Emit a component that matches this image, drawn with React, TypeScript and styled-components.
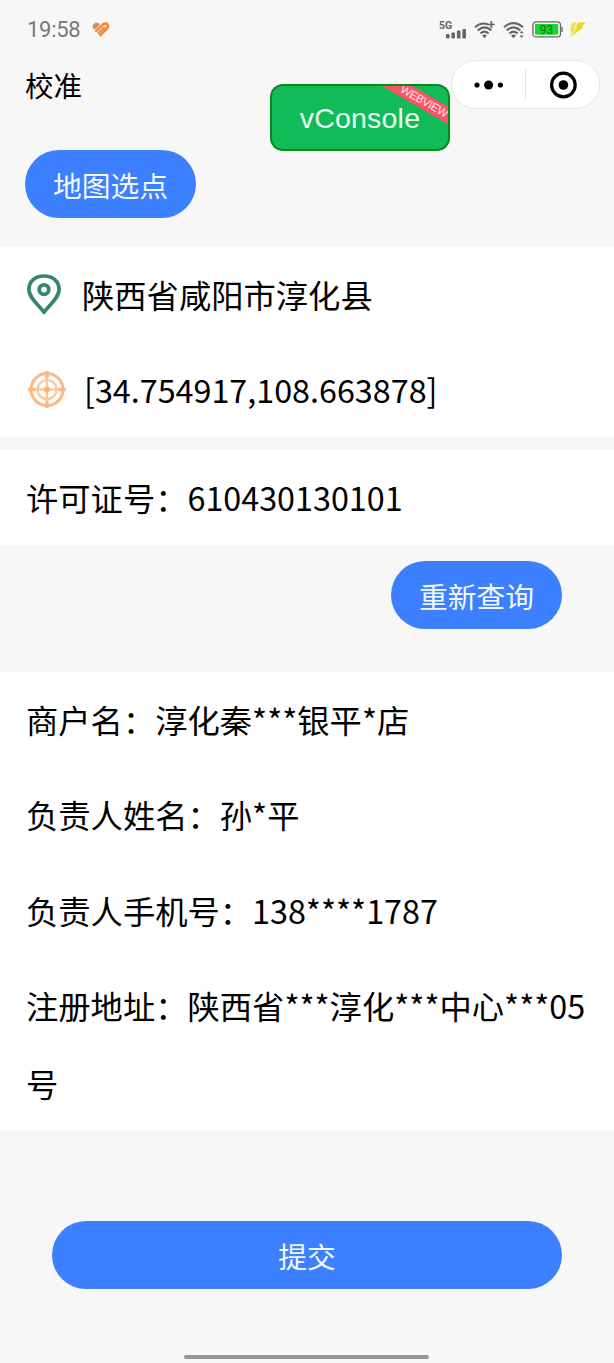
import React from "react";
import styled, { createGlobalStyle } from "styled-components";

const GlobalStyle = createGlobalStyle`
  * { box-sizing: border-box; }
  body {
    margin: 0;
    background: #f7f7f7;
    color: #000;
    font-family: "Noto Sans CJK SC", "Noto Sans", sans-serif;
  }
`;

const Page = styled.div`
  height: 1363px;
  display: flex;
  flex-direction: column;
  background: #f7f7f7;
  overflow: hidden;
  position: relative;
`;

const StatusBar = styled.header`
  height: 58px;
  flex: none;
  padding: 1px 26px 0 27px;
  display: flex;
  align-items: center;
  justify-content: space-between;
`;

const StatusGroup = styled.div<{ $gap: number }>`
  display: flex;
  align-items: center;
  gap: ${(p) => p.$gap}px;
`;

const Clock = styled.span`
  font: 400 22px/26px Roboto, sans-serif;
  letter-spacing: -0.3px;
  color: #777;
`;

const NavBar = styled.nav`
  height: 56px;
  flex: none;
  padding: 0 14px 0 25px;
  display: flex;
  align-items: center;
  justify-content: space-between;
`;

const Title = styled.h1`
  margin: -3px 0 0;
  font-size: 28.5px;
  line-height: 40px;
  font-weight: 400;
`;

const Capsule = styled.div`
  width: 149px;
  height: 49px;
  margin-top: -3px;
  border: 1.5px solid #e8e8e8;
  border-radius: 25px;
  background: #fff;
  display: flex;
  align-items: center;
`;

const CapsuleButton = styled.button`
  flex: 1;
  height: 31px;
  padding: 0;
  border: 0;
  background: none;
  display: flex;
  align-items: center;
  justify-content: center;
  & + & {
    border-left: 1px solid #e4e4e4;
  }
`;

const DebugButton = styled.button`
  position: absolute;
  left: 270px;
  top: 84px;
  width: 180px;
  height: 67px;
  padding: 0;
  border: 2px solid #0b8a1c;
  border-radius: 13px;
  background: #11bb58;
  color: #e9fff2;
  overflow: hidden;
  font: 400 28.5px/62px "Liberation Sans", sans-serif;
  letter-spacing: 0.2px;
`;

const Ribbon = styled.span`
  position: absolute;
  right: -32px;
  top: 8px;
  width: 112px;
  height: 15px;
  transform: rotate(30deg);
  background: #fb5468;
  color: #ffe9ea;
  font: 400 11.4px/15px "Liberation Sans", sans-serif;
  letter-spacing: -0.4px;
  text-align: center;
`;

const Actions = styled.div<{ $height: number; $top: number; $align: string; $pad: string }>`
  height: ${(p) => p.$height}px;
  flex: none;
  padding: ${(p) => p.$top}px ${(p) => p.$pad} 0;
  display: flex;
  align-items: flex-start;
  justify-content: ${(p) => p.$align};
`;

const PillButton = styled.button<{ $wide?: boolean }>`
  width: ${(p) => (p.$wide ? "100%" : "171px")};
  height: 68px;
  padding: 2px 0 0;
  border: 0;
  border-radius: 34px;
  background: #3d80ff;
  color: #f1f8ff;
  font: 400 28.8px/66px "Noto Sans CJK SC", sans-serif;
`;

const Card = styled.section<{ $gap?: number; $rowGap?: number }>`
  flex: none;
  display: flex;
  flex-direction: column;
  gap: ${(p) => p.$rowGap ?? 0}px;
  background: #fff;
  margin-bottom: ${(p) => p.$gap ?? 0}px;
`;

const Row = styled.div`
  padding: 9.2px 20px 8.5px 26px;
  display: flex;
  font-size: 32.3px;
  line-height: 77.5px;
`;

const RowIcon = styled.span<{ $width: number; $inset?: number }>`
  width: ${(p) => p.$width}px;
  padding-left: ${(p) => p.$inset ?? 0}px;
  flex: none;
  display: flex;
  align-items: center;
`;

const HomeIndicator = styled.div`
  width: 245px;
  height: 4px;
  margin: auto auto 4px 184px;
  border-radius: 2px;
  background: #959595;
`;

const HeartIcon = () => (
  <svg width="18" height="15" viewBox="0 0 18 15" fill="none" stroke="#ee8a35" strokeLinecap="round" strokeLinejoin="round">
    <path d="M.6 5 C.4 2 3 .2 5.4 .8 Q7 1.2 8 2.2 L2.8 7.4 Q.8 6.6 .6 5Z" fill="#dd8a4c" stroke="none" />
    <path d="M4.2 8.8 L10.8 2.6 C12.6 1 15.2 1.4 15.8 3.4 C16.2 4.8 15.6 5.8 14.6 6.8 L8.4 13.2" strokeWidth="2.6" />
    <path d="M6.6 11 L12.2 5.6" strokeWidth="2.3" />
  </svg>
);

const SignalIcon = () => (
  <svg width="28" height="19" viewBox="0 0 28 19">
    <text x="0" y="8.8" fontFamily="Roboto, sans-serif" fontSize="10.5" fontWeight="700" fill="#666">5G</text>
    <g fill="#666">
      <rect x="7" y="14" width="3.6" height="4.4" rx="1" />
      <rect x="12.4" y="12.5" width="3.6" height="5.9" rx="1" />
      <rect x="17.9" y="10.6" width="3.6" height="7.8" rx="1" />
      <rect x="23.4" y="9" width="3.6" height="9.4" rx="1" />
    </g>
  </svg>
);

const WifiIcon = ({ plus }: { plus?: boolean }) => (
  <svg width="22" height="18" viewBox="0 0 22 18" fill="none" stroke="#666" strokeWidth="2.1">
    <path d={plus ? "M1 6.2 Q7.2 .8 14 3.4" : "M1 6.2 Q10.5 -2 20 6.2"} />
    <path d="M3.7 9.4 Q10.5 3.4 17.3 9.4" />
    <path d="M6.4 12.5 Q10.5 8.8 14.6 12.5" />
    <path d="M8 14.4 Q10.5 12.4 13 14.4 L10.5 17.2Z" fill="#666" stroke="none" />
    {plus ? (
      <path d="M17.4 0 V7 M14 3.5 H20.8" strokeWidth="1.7" />
    ) : (
      <path d="M18.6 9.8 L20.6 12.2 H16.6Z M18.6 17 L20.6 14.6 H16.6Z" fill="#666" stroke="none" />
    )}
  </svg>
);

const BatteryIcon = () => (
  <svg width="31" height="17" viewBox="0 0 31 17">
    <rect x=".9" y=".9" width="27.6" height="15" rx="3.2" fill="#f8f8f8" stroke="#666" strokeWidth="1.3" />
    <rect x="3" y="3" width="23.2" height="10.8" rx="1" fill="#17d62d" />
    <path d="M30.1 6 V11" stroke="#666" strokeWidth="1.3" />
    <text x="14.6" y="12.7" textAnchor="middle" fontFamily="Roboto, sans-serif" fontSize="12" fontWeight="400" fill="#236b26">93</text>
  </svg>
);

const BoltIcon = () => (
  <svg width="18" height="15" viewBox="0 0 18 15">
    <path d="M2.2 .6 H6.4 L4 6 H6 L.4 14.4 L1.2 8.4 H0Z" fill="#efe24e" />
    <path d="M7.6 .6 H16 L11 5 H13.6 L1.6 14.4 L6 7.6 H4.2Z" fill="#f0d51c" />
    <path d="M7.4 .4 L5 6.2 H7" fill="none" stroke="#f7f7f7" strokeWidth=".8" />
  </svg>
);

const MoreIcon = () => (
  <svg width="30" height="12" viewBox="0 0 30 12">
    <circle cx="3" cy="6" r="2.6" />
    <circle cx="14.6" cy="6" r="4.5" />
    <circle cx="26.4" cy="6" r="2.6" />
  </svg>
);

const TargetIcon = () => (
  <svg width="28" height="28" viewBox="0 0 28 28">
    <circle cx="14.4" cy="14" r="11.8" fill="none" stroke="#000" strokeWidth="3.2" />
    <circle cx="14.4" cy="14" r="4.8" />
  </svg>
);

const PinIcon = () => (
  <svg width="36" height="42" viewBox="0 0 36 42" fill="none" stroke="#36876a">
    <path d="M18 38.4 C14 32.4 2.9 24 2.9 15.4 C2.9 7 9.5 2 18 2 C26.5 2 33.1 7 33.1 15.4 C33.1 24 22 32.4 18 38.4Z" strokeWidth="3.7" strokeLinejoin="round" />
    <circle cx="18" cy="15.6" r="4.8" strokeWidth="3.8" />
  </svg>
);

const CrosshairIcon = () => (
  <svg width="40" height="40" viewBox="0 0 40 40" fill="none" stroke="#fab885">
    <circle cx="20" cy="19.6" r="16" strokeWidth="3" />
    <circle cx="20" cy="19.6" r="9.5" strokeWidth="2.4" stroke="#fbc79f" />
    <path d="M20 1 V38 M1.4 19.6 H38.6" strokeWidth="2.5" stroke="#fbc79f" />
    <path d="M20 1 V8 M20 31 V38 M1.4 19.6 H8.4 M31.6 19.6 H38.6" strokeWidth="3.4" />
    <circle cx="20" cy="19.6" r="3" fill="#fab27c" stroke="none" />
  </svg>
);

const merchant = [
  "商户名：淳化秦***银平*店",
  "负责人姓名：孙*平",
  "负责人手机号：138****1787",
  "注册地址：陕西省***淳化***中心***05号",
];

export default function App() {
  return (
    <>
      <GlobalStyle />
      <Page>
        <StatusBar>
          <StatusGroup $gap={12}>
            <Clock>19:58</Clock>
            <HeartIcon />
          </StatusGroup>
          <StatusGroup $gap={7}>
            <SignalIcon />
            <WifiIcon plus />
            <WifiIcon />
            <BatteryIcon />
            <BoltIcon />
          </StatusGroup>
        </StatusBar>
        <NavBar>
          <Title>校准</Title>
          <Capsule>
            <CapsuleButton aria-label="更多"><MoreIcon /></CapsuleButton>
            <CapsuleButton aria-label="关闭"><TargetIcon /></CapsuleButton>
          </Capsule>
        </NavBar>
        <Actions $height={133} $top={36} $align="flex-start" $pad="25px">
          <PillButton>地图选点</PillButton>
        </Actions>
        <Card $gap={12}>
          <Row>
            <RowIcon $width={56}><PinIcon /></RowIcon>
            陕西省咸阳市淳化县
          </Row>
          <Row>
            <RowIcon $width={58} $inset={1.4}><CrosshairIcon /></RowIcon>
            [34.754917,108.663878]
          </Row>
        </Card>
        <Card>
          <Row>许可证号：610430130101</Row>
        </Card>
        <Actions $height={127} $top={16.5} $align="flex-end" $pad="52px">
          <PillButton>重新查询</PillButton>
        </Actions>
        <Card $rowGap={0.4}>
          {merchant.map((line) => (
            <Row key={line}>{line}</Row>
          ))}
        </Card>
        <Actions $height={160} $top={90.2} $align="center" $pad="52px">
          <PillButton $wide>提交</PillButton>
        </Actions>
        <HomeIndicator />
        <DebugButton>
          vConsole
          <Ribbon>WEBVIEW</Ribbon>
        </DebugButton>
      </Page>
    </>
  );
}
